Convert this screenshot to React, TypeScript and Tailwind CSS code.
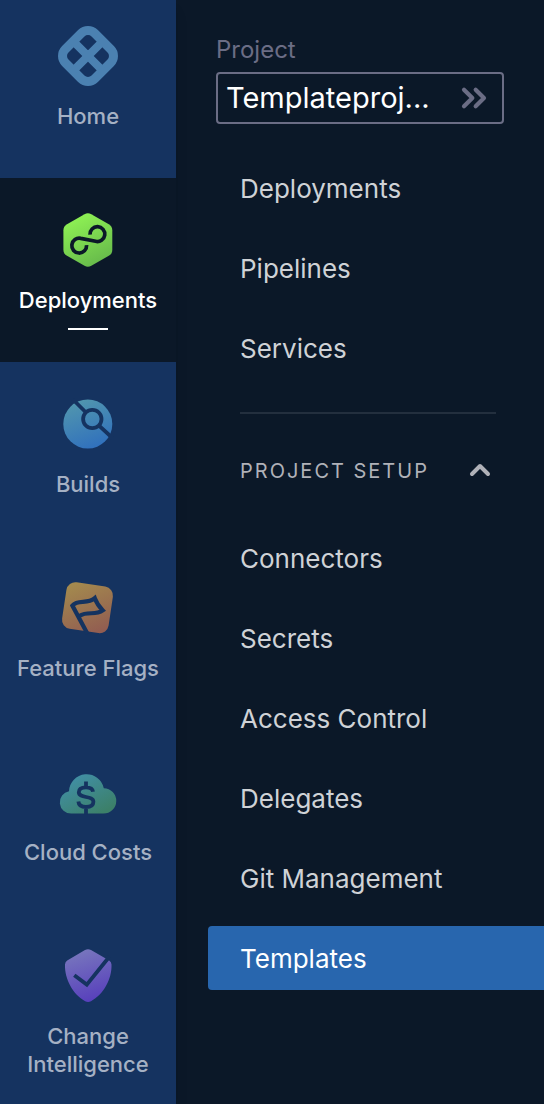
import type { ReactNode } from "react";
import { ChevronsRight, ChevronUp } from "lucide-react";

const iconClass = "size-[60px] shrink-0";

function HomeIcon() {
  return (
    <svg viewBox="0 0 60 60" className={iconClass} fill="none" stroke="#4b81b1" aria-hidden="true">
      <g transform="rotate(45 30 30)">
        <rect x="9.2" y="9.2" width="41.6" height="41.6" rx="9.5" strokeWidth="9" />
        <path d="M30 10V50M10 30H50" strokeWidth="8" />
      </g>
    </svg>
  );
}

function DeploymentsIcon() {
  return (
    <svg viewBox="0 0 60 60" className={iconClass} fill="none" aria-hidden="true">
      <defs>
        <linearGradient id="deploy" x1="18" y1="5" x2="42" y2="55" gradientUnits="userSpaceOnUse">
          <stop stopColor="#8ff254" />
          <stop offset="1" stopColor="#66b94b" />
        </linearGradient>
      </defs>
      <path
        d="M26.5 4.2Q29.9 2.4 33.3 4.2L50.8 14.2Q54.3 16.3 54.3 20.3V39.7Q54.3 43.7 50.8 45.8L33.3 55.8Q29.9 57.6 26.5 55.8L9 45.8Q5.4 43.7 5.4 39.7V20.3Q5.4 16.3 9 14.2Z"
        fill="url(#deploy)"
      />
      <path
        d="M32 24.6A7.4 7.4 0 1 1 37.6 31.3L22.8 28.4A7.4 7.4 0 1 0 28.6 35.2"
        stroke="#0b1828"
        strokeWidth="3.7"
        strokeLinejoin="round"
      />
    </svg>
  );
}

function BuildsIcon() {
  return (
    <svg viewBox="0 0 60 60" className={iconClass} fill="none" aria-hidden="true">
      <defs>
        <linearGradient id="builds" x1="20" y1="6" x2="38" y2="54" gradientUnits="userSpaceOnUse">
          <stop stopColor="#5196ae" />
          <stop offset="1" stopColor="#3070bd" />
        </linearGradient>
      </defs>
      <circle cx="29.8" cy="30" r="24.5" fill="url(#builds)" />
      <g stroke="#153360" strokeWidth="3.8">
        <circle cx="34.3" cy="25" r="9.2" />
        <path d="M15 5.5L27.5 18M41 31.6L54.5 44" />
      </g>
    </svg>
  );
}

function FlagIcon() {
  return (
    <svg viewBox="0 0 60 60" className={iconClass} fill="none" aria-hidden="true">
      <defs>
        <linearGradient id="flag" x1="14" y1="8" x2="42" y2="54" gradientUnits="userSpaceOnUse">
          <stop stopColor="#a3894e" />
          <stop offset="1" stopColor="#925d51" />
        </linearGradient>
      </defs>
      <rect x="6" y="6.2" width="47" height="47" rx="9" transform="rotate(8.5 29.5 29.7)" fill="url(#flag)" />
      <path
        d="M29.6 56L14.4 27.6C20 20.5 29 27 36.8 20.2C38.5 25 41.5 29 44.8 32.4C37 38 30 32.5 21.2 38"
        stroke="#153360"
        strokeWidth="4.2"
      />
    </svg>
  );
}

function CloudIcon() {
  return (
    <svg viewBox="0 0 60 60" className={iconClass} fill="none" aria-hidden="true">
      <defs>
        <linearGradient id="cloud" x1="20" y1="12" x2="42" y2="52" gradientUnits="userSpaceOnUse">
          <stop stopColor="#418fa5" />
          <stop offset="1" stopColor="#3c8069" />
        </linearGradient>
      </defs>
      <path
        d="M13.2 51.6A11.3 11.3 0 0 1 11 29.2A17.6 17.6 0 0 1 45.8 26.2A12.7 12.7 0 0 1 45.3 51.6Z"
        fill="url(#cloud)"
      />
      <path
        d="M35 29.8C34.7 26.6 32 25.3 28 25.3C23 25.3 20.8 27.6 20.8 30.3C20.8 37 35.4 33 35.4 39.8C35.4 43.5 32 45 28 45C23.5 45 20.7 43.3 20.4 39.5M28 19.6V25.3M28 45V52.3"
        stroke="#153360"
        strokeWidth="3.8"
      />
    </svg>
  );
}

function ShieldIcon() {
  return (
    <svg viewBox="0 0 60 60" className={iconClass} fill="none" aria-hidden="true">
      <defs>
        <linearGradient id="shield" x1="20" y1="4" x2="36" y2="54" gradientUnits="userSpaceOnUse">
          <stop stopColor="#7877bd" />
          <stop offset="1" stopColor="#5840bc" />
        </linearGradient>
      </defs>
      <path
        d="M27 4Q30 2.4 33 4L51.2 14.4Q53.4 15.7 53.5 18.5C54 33 45.5 48.5 33 55.2Q30 56.8 27.2 55.2C15 48.5 6.5 33 7 18.5Q7.1 15.7 9.2 14.4Z"
        fill="url(#shield)"
      />
      <path d="M16.3 29.2L28.8 38.6L51.5 10.5" stroke="#153360" strokeWidth="3.8" />
    </svg>
  );
}

const modules: { label: string; icon: ReactNode }[] = [
  { label: "Home", icon: <HomeIcon /> },
  { label: "Deployments", icon: <DeploymentsIcon /> },
  { label: "Builds", icon: <BuildsIcon /> },
  { label: "Feature Flags", icon: <FlagIcon /> },
  { label: "Cloud Costs", icon: <CloudIcon /> },
  { label: "Change Intelligence", icon: <ShieldIcon /> },
];

function ModuleLink({ label, icon, active, first }: { label: string; icon: ReactNode; active: boolean; first: boolean }) {
  return (
    <a
      href="#"
      aria-current={active ? "page" : undefined}
      className={`flex flex-col items-center px-2 text-center text-[22px] leading-7 font-medium ${
        first ? "min-h-[178px] pt-[26px]" : "min-h-[184px] pt-8"
      } ${active ? "bg-[#0b1828] text-white" : "text-[#a5b1c4]"}`}
    >
      {icon}
      <span className="mt-4">{label}</span>
      {active && <span className="mt-[14px] h-0.5 w-10 bg-white" />}
    </a>
  );
}

function MenuLink({ label, active = false }: { label: string; active?: boolean }) {
  return (
    <a
      href="#"
      aria-current={active ? "page" : undefined}
      className={`flex h-16 items-center rounded-l pt-0.5 pl-8 text-[26px] leading-8 ${
        active ? "bg-[#2866ae] text-white" : "text-[#cfd2d6]"
      }`}
    >
      {label}
    </a>
  );
}

export default function App() {
  return (
    <div className="flex min-h-screen bg-[#0b1828] font-['Inter',sans-serif]">
      <nav aria-label="Modules" className="w-44 shrink-0 bg-[#153360] shadow-lg">
        {modules.map((m, i) => (
          <ModuleLink key={m.label} label={m.label} icon={m.icon} active={m.label === "Deployments"} first={i === 0} />
        ))}
      </nav>
      <div className="flex min-w-0 flex-1 flex-col pl-8 pt-9">
        <div className="mb-8 ml-2 mr-10 flex flex-col gap-2">
          <span id="project-label" className="text-2xl leading-7 text-[#6b6d85]">
            Project
          </span>
          <button
            type="button"
            aria-labelledby="project-label project-name"
            className="flex h-[52px] items-center justify-between rounded border-2 border-[#6b6d85] px-2 text-[29px] leading-9 text-white"
          >
            <span id="project-name">Templateproj...</span>
            <ChevronsRight size={40} strokeWidth={2.5} className="text-[#6b6d85]" />
          </button>
        </div>
        <nav aria-label="Project" className="flex flex-col">
          <div className="flex flex-col gap-4">
            <MenuLink label="Deployments" />
            <MenuLink label="Pipelines" />
            <MenuLink label="Services" />
          </div>
          <hr className="ml-8 mr-12 mt-8 border-0 border-t-2 border-[#232f3e]" />
          <button
            type="button"
            aria-expanded="true"
            className="my-6 ml-8 mr-12 flex h-16 items-center justify-between text-xl tracking-widest text-[#b0b1b8]"
          >
            <span className="pt-0.5">PROJECT SETUP</span>
            <ChevronUp size={32} strokeWidth={3} />
          </button>
          <div className="flex flex-col gap-4">
            <MenuLink label="Connectors" />
            <MenuLink label="Secrets" />
            <MenuLink label="Access Control" />
            <MenuLink label="Delegates" />
            <MenuLink label="Git Management" />
            <MenuLink label="Templates" active />
          </div>
        </nav>
      </div>
    </div>
  );
}
